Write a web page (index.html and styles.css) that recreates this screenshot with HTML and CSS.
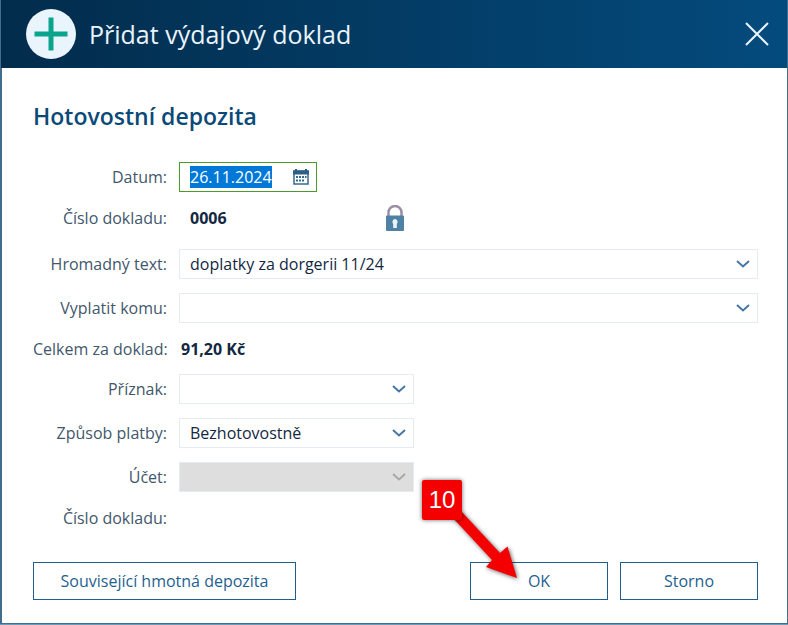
FILE: index.html
```
<!DOCTYPE html>
<html lang="cs">
<head>
  <meta charset="UTF-8">
  <meta name="viewport" content="width=device-width, initial-scale=1.0">
  <title>Přidat výdajový doklad</title>
  <link rel="stylesheet" href="styles.css">
</head>
<body>
<form class="dialog">
  <header class="header">
    <svg class="plus" viewBox="0 0 50 50" aria-hidden="true">
      <circle cx="25" cy="25" r="25" fill="#eaf4fc"/>
      <path d="M25 11V39M11 25H39" stroke="#0aa38c" stroke-width="5" stroke-linecap="square"/>
    </svg>
    <h1 class="title">Přidat výdajový doklad</h1>
    <button type="button" class="close" aria-label="Zavřít">
      <svg viewBox="0 0 24 24"><path d="M1 1L23 23M23 1L1 23"/></svg>
    </button>
  </header>

  <div class="content">
    <h2 class="subtitle">Hotovostní depozita</h2>

    <div class="rows">
      <div class="row">
        <label class="label" for="datum">Datum:</label>
        <div class="date">
          <input type="text" id="datum" class="date-input" value="26.11.2024">
          <button type="button" class="calendar" aria-label="Kalendář">
            <svg viewBox="0 0 16 16">
              <path d="M1 2H15V15H1Z" fill="#fff" stroke="#3a6a8c" stroke-width="1.500"/>
              <path d="M0 1.500H2V0H4V1.500H12V0H14V1.500H16V5.500H0Z" fill="#2c5f83"/>
              <path d="M6 7H8V9H6ZM9 7H11V9H9ZM12 7H13.500V9H12ZM3 7H5V9H3ZM3 10.500H5V12.500H3ZM6 10.500H8V12.500H6ZM9 10.500H11V12.500H9Z" fill="#3a6a8c"/>
            </svg>
          </button>
        </div>
      </div>

      <div class="row text-row lock-row">
        <span class="label">Číslo dokladu:</span>
        <div class="number">
          <b class="value">0006</b>
          <svg class="lock" viewBox="0 0 18 26" aria-hidden="true">
            <path d="M2.500 12V7.500A6.500 6.500 0 0 1 15.500 7.500V12" fill="none" stroke="#9a8fa5" stroke-width="2.500"/>
            <rect y="10.500" width="18" height="15.500" rx="1" fill="#4e81a4"/>
            <path d="M9 14A3 3 0 0 1 10.800 19V23H7.200V19A3 3 0 0 1 9 14Z" fill="#eaf4fc"/>
          </svg>
        </div>
      </div>

      <div class="row">
        <label class="label" for="text">Hromadný text:</label>
        <div class="select">
          <select id="text"><option>doplatky za dorgerii 11/24</option></select>
          <svg class="arrow" viewBox="0 0 14 8"><path d="M1 1L7 6.500L13 1"/></svg>
        </div>
      </div>

      <div class="row">
        <label class="label" for="komu">Vyplatit komu:</label>
        <div class="select">
          <select id="komu"><option></option></select>
          <svg class="arrow" viewBox="0 0 14 8"><path d="M1 1L7 6.500L13 1"/></svg>
        </div>
      </div>

      <div class="row text-row">
        <span class="label">Celkem za doklad:</span>
        <b class="total">91,20 Kč</b>
      </div>

      <div class="row">
        <label class="label" for="priznak">Příznak:</label>
        <div class="select short">
          <select id="priznak"><option></option></select>
          <svg class="arrow" viewBox="0 0 14 8"><path d="M1 1L7 6.500L13 1"/></svg>
        </div>
      </div>

      <div class="row">
        <label class="label" for="platba">Způsob platby:</label>
        <div class="select short">
          <select id="platba"><option>Bezhotovostně</option></select>
          <svg class="arrow" viewBox="0 0 14 8"><path d="M1 1L7 6.500L13 1"/></svg>
        </div>
      </div>

      <div class="row">
        <label class="label" for="ucet">Účet:</label>
        <div class="select short disabled">
          <select id="ucet" disabled><option></option></select>
          <svg class="arrow" viewBox="0 0 14 8"><path d="M1 1L7 6.500L13 1"/></svg>
        </div>
      </div>

      <div class="row text-row">
        <span class="label">Číslo dokladu:</span>
      </div>
    </div>

    <footer class="footer">
      <button type="button" class="btn wide">Související hmotná depozita</button>
      <div class="confirm">
        <button type="button" class="btn">OK</button>
        <!-- krok návodu -->
        <div class="callout">
          <svg class="pointer" viewBox="0 0 100 100" aria-hidden="true">
            <path d="M31 38L39 31L78 73L85.500 66.500L95 98L64 87L70 80Z" fill="#f40000"/>
          </svg>
          <span class="step">10</span>
        </div>
      </div>
      <button type="button" class="btn">Storno</button>
    </footer>
  </div>
</form>

<script>
  // po otevření je datum označené
  const datum = document.getElementById("datum");
  datum.focus();
  datum.select();
</script>
</body>
</html>
```
FILE: styles.css
```
* {
  box-sizing: border-box;
}
body {
  margin: 0;
  font-family: "Open Sans", "Noto Sans", sans-serif;
  font-size: 16px;
  line-height: 22px;
  color: #12283f;
  background-color: #6f9ab8;
}
button, input, select {
  font: inherit;
  color: inherit;
}
.dialog {
  background-color: #fff;
  border: 1px solid #416e8d;
  border-top: none;
  border-left-width: 2px;
  margin-bottom: 1px;
}
.header {
  display: flex;
  align-items: center;
  gap: 13px;
  height: 68px;
  margin-left: -1px;
  padding: 0 18px 0 25px;
  background: linear-gradient(to right, #022c4c, #033a62 45%, #044b7d);
}
.plus {
  width: 50px;
  height: 50px;
}
.title {
  flex: 1;
  margin: 0;
  font-size: 25px;
  line-height: 34px;
  font-weight: 400;
  color: #eaf4fc;
}
.close {
  display: flex;
  padding: 0;
  border: none;
  background: none;
  cursor: pointer;
}
.close svg {
  width: 24px;
  height: 24px;
  fill: none;
  stroke: #eaf4fc;
  stroke-width: 2;
}
.content {
  padding: 32px 29px 23px 31px;
}
.subtitle {
  margin: 0 0 30px;
  font-size: 23px;
  line-height: 32px;
  font-weight: 600;
  color: #0b4a78;
}
.rows {
  display: flex;
  flex-direction: column;
  gap: 14px;
}
.row {
  display: grid;
  grid-template-columns: 134px 1fr;
  column-gap: 12px;
  align-items: center;
  min-height: 30px;
}
.text-row {
  min-height: 23px;
}
.lock-row {
  padding-bottom: 6px;
}
.label {
  text-align: right;
  white-space: nowrap;
  color: #42576c;
}
.date {
  display: flex;
  align-items: center;
  width: 138px;
  height: 30px;
  padding: 0 7px 0 10px;
  border: 1px solid #4c9a2a;
}
.date-input {
  flex: 1;
  min-width: 0;
  padding: 0;
  border: none;
  outline: none;
}
.date-input::selection {
  background-color: #0078d7;
  color: #fff;
}
.calendar {
  display: flex;
  padding: 0;
  border: none;
  background: none;
  cursor: pointer;
}
.calendar svg {
  width: 16px;
  height: 16px;
}
.number {
  display: flex;
  align-items: center;
  justify-content: space-between;
  width: 225px;
  height: 23px;
  padding-left: 11px;
}
.lock {
  width: 18px;
  height: 26px;
}
.total {
  padding-left: 2px;
}
.select {
  position: relative;
  height: 30px;
}
.select select {
  appearance: none;
  display: block;
  width: 100%;
  height: 100%;
  padding: 0 32px 0 10px;
  border: 1px solid #e6eaf6;
  border-radius: 0;
  background-color: #fff;
}
.short {
  width: 235px;
}
.arrow {
  position: absolute;
  top: 11px;
  right: 8px;
  width: 14px;
  height: 8px;
  fill: none;
  stroke: #4677a3;
  stroke-width: 2;
  pointer-events: none;
}
.disabled select {
  background-color: #dedede;
  opacity: 1;
}
.disabled .arrow {
  stroke: #a8a8a8;
}
.footer {
  display: flex;
  gap: 12px;
  margin-top: 33px;
}
.btn {
  width: 138px;
  height: 38px;
  padding: 0;
  border: 1px solid #1f5f90;
  background-color: #fff;
  color: #1f5f90;
  cursor: pointer;
}
.btn:hover {
  background-color: #eaf4fc;
}
.wide {
  width: 263px;
}
.confirm {
  position: relative;
  margin-left: auto;
}
.callout {
  position: absolute;
  top: -82px;
  left: -48px;
  width: 100px;
  height: 100px;
  pointer-events: none;
}
.pointer {
  position: absolute;
  inset: 0;
  filter: drop-shadow(1px 1px 2px rgba(0,0,0,0.6));
}
.step {
  position: relative;
  display: block;
  width: 40px;
  border-radius: 2px;
  background-color: #f40000;
  box-shadow: 0 0 4px rgba(0,0,0,0.6);
  font-family: "Liberation Sans", Arial, sans-serif;
  font-size: 24px;
  line-height: 40px;
  text-align: center;
  color: #fff;
}
```
